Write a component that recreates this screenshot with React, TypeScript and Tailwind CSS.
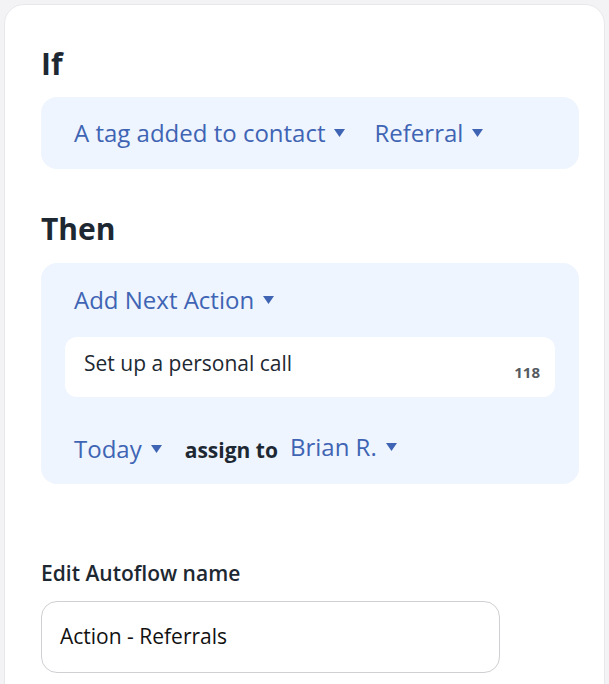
import { ReactNode } from "react";

function Caret() {
  return (
    <svg viewBox="0 0 12 10" className="w-[13px] h-[10px] ml-[8px] inline-block fill-[#3f64b4]">
      <path d="M0.5 1 L11.5 1 L6 9 Z" />
    </svg>
  );
}

function Pick({ children }: { children: ReactNode }) {
  return (
    <span className="inline-flex items-center text-[24px] text-[#3f64b4] leading-none">
      {children}
      <Caret />
    </span>
  );
}

export default function App() {
  return (
    <div className="min-h-[684px] bg-[#f3f3f5] pt-[4px] pl-[4px] pr-[4px] font-['Open_Sans',sans-serif] text-[#1d2832]">
      <div className="bg-white rounded-t-[20px] border border-[#e8e8ec] pl-[36px] pr-[25px] pt-[39px] pb-[12px] min-h-[680px]">
        <h2 className="text-[30px] font-bold leading-[40px]">If</h2>
        <div className="mt-[13px] bg-[#eef5fe] rounded-[16px] h-[72px] px-[33px] flex items-center gap-[28px]">
          <Pick>A tag added to contact</Pick>
          <Pick>Referral</Pick>
        </div>

        <h2 className="mt-[40px] text-[30px] font-bold leading-[40px]">Then</h2>
        <div className="mt-[14px] bg-[#eef5fe] rounded-[16px] pt-[25px] pb-[22px] px-[24px]">
          <div className="pl-[9px]">
            <Pick>Add Next Action</Pick>
          </div>
          <div className="mt-[22px] bg-white rounded-[12px] h-[60px] pl-[19px] pr-[15px] flex items-start justify-between">
            <span className="text-[21px] leading-[28px] mt-[12px] text-[#1d2832]">Set up a personal call</span>
            <span className="text-[15px] font-bold text-[#555b61] leading-[20px] mt-[25px]">118</span>
          </div>
          <div className="mt-[38px] pl-[9px] flex items-center">
            <Pick>Today</Pick>
            <span className="ml-[22px] text-[21px] font-bold text-[#1d2832] leading-none mt-[3px]">assign to</span>
            <span className="ml-[12px]">
              <Pick>Brian R.</Pick>
            </span>
          </div>
        </div>

        <label className="block mt-[75px] text-[21px] font-semibold leading-[28px]">Edit Autoflow name</label>
        <div className="mt-[14px] w-[459px] h-[72px] border border-[#d0d0d4] rounded-[16px] flex items-center px-[18px]">
          <span className="text-[21px] text-[#111]">Action - Referrals</span>
        </div>
      </div>
    </div>
  );
}
